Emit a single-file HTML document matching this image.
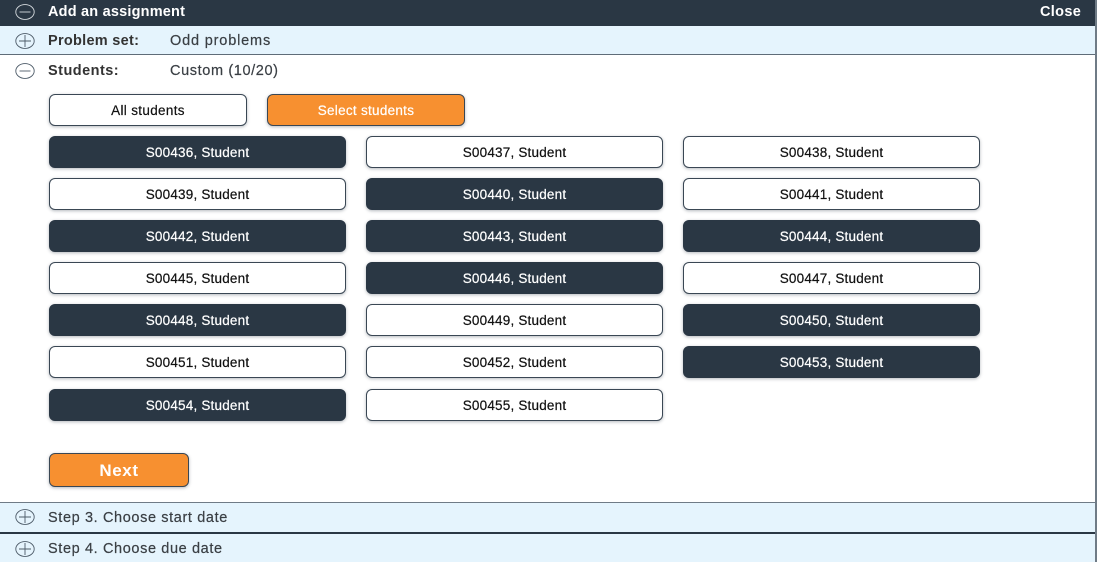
<!DOCTYPE html>
<html><head><meta charset="utf-8">
<style>
html,body{margin:0;padding:0;background:#fff}
body{width:1097px;height:562px;position:relative;overflow:hidden;font-family:"Liberation Sans",sans-serif;color:#2a3744}
.bar{position:absolute;left:0;width:1095px}
.t{position:absolute;white-space:nowrap;font-size:14.5px;letter-spacing:.62px;line-height:16px;-webkit-text-stroke:.2px currentColor}
.b{font-weight:bold;letter-spacing:.28px;-webkit-text-stroke:0}
.btn{position:absolute;box-sizing:border-box;border-radius:6px;border:1.5px solid #3a4754;text-align:center;background:#fff;color:#111;font-size:13.5px;letter-spacing:.2px;box-shadow:0 1px 3px rgba(42,55,68,.35);-webkit-text-stroke:.2px currentColor}
.s{width:297px;height:32px;line-height:32px}
.d{background:#2a3744;color:#fff;border-color:#2a3744}
.o{background:#f79030;color:#fff;border-color:#3a4754}
svg{position:absolute;left:15px}
</style></head><body>
<div style="position:absolute;left:1095px;top:0;width:2px;height:562px;background:#6f7b86"></div>

<div class="bar" style="top:0;height:26px;background:#2a3744"></div>
<svg style="top:2.5px" width="20" height="18" viewBox="0 0 20 18" fill="none" stroke="#d5dade" stroke-width=".9"><ellipse cx="10" cy="9" rx="9.2" ry="7.4"/><path d="M4.5 9h11"/></svg>
<div class="t b" style="left:48px;top:4px;color:#fff;letter-spacing:.2px">Add an assignment</div>
<div class="t b" style="left:1040px;top:4px;color:#fff;letter-spacing:.33px">Close</div>

<div class="bar" style="top:26px;height:29px;background:#e5f4fd;border-bottom:1.5px solid #5f6c78;box-sizing:border-box"></div>
<svg style="top:31.5px" width="20" height="18" viewBox="0 0 20 18" fill="none" stroke="#4d5b68" stroke-width=".9"><ellipse cx="10" cy="9" rx="9.2" ry="7.4"/><path d="M4 9h12M10 3v12"/></svg>
<div class="t b" style="left:48px;top:33px;color:#333">Problem set:</div>
<div class="t" style="left:170px;top:33px;color:#3a3f44;letter-spacing:.83px">Odd problems</div>

<svg style="top:61.5px" width="20" height="18" viewBox="0 0 20 18" fill="none" stroke="#4d5b68" stroke-width=".9"><ellipse cx="10" cy="9" rx="9.2" ry="7.4"/><path d="M4.5 9h11"/></svg>
<div class="t b" style="left:48px;top:63px;color:#333;letter-spacing:.47px">Students:</div>
<div class="t" style="left:170px;top:63px;color:#3a3f44">Custom (10/20)</div>

<div class="btn" style="left:49px;top:94px;width:198px;height:32px;line-height:31px;letter-spacing:.33px">All students</div>
<div class="btn o" style="left:267px;top:94px;width:198px;height:32px;line-height:31px;letter-spacing:.28px">Select students</div>

<div class="btn s d" style="left:49px;top:136px">S00436, Student</div>
<div class="btn s" style="left:366px;top:136px">S00437, Student</div>
<div class="btn s" style="left:683px;top:136px">S00438, Student</div>

<div class="btn s" style="left:49px;top:178px">S00439, Student</div>
<div class="btn s d" style="left:366px;top:178px">S00440, Student</div>
<div class="btn s" style="left:683px;top:178px">S00441, Student</div>

<div class="btn s d" style="left:49px;top:220px">S00442, Student</div>
<div class="btn s d" style="left:366px;top:220px">S00443, Student</div>
<div class="btn s d" style="left:683px;top:220px">S00444, Student</div>

<div class="btn s" style="left:49px;top:262px">S00445, Student</div>
<div class="btn s d" style="left:366px;top:262px">S00446, Student</div>
<div class="btn s" style="left:683px;top:262px">S00447, Student</div>

<div class="btn s d" style="left:49px;top:304px">S00448, Student</div>
<div class="btn s" style="left:366px;top:304px">S00449, Student</div>
<div class="btn s d" style="left:683px;top:304px">S00450, Student</div>

<div class="btn s" style="left:49px;top:346px">S00451, Student</div>
<div class="btn s" style="left:366px;top:346px">S00452, Student</div>
<div class="btn s d" style="left:683px;top:346px">S00453, Student</div>

<div class="btn s d" style="left:49px;top:388.5px">S00454, Student</div>
<div class="btn s" style="left:366px;top:388.5px">S00455, Student</div>

<div class="btn o" style="left:49px;top:453px;width:140px;height:34px;line-height:34px;font-size:17px;font-weight:bold;letter-spacing:.6px;-webkit-text-stroke:0">Next</div>

<div class="bar" style="top:502px;height:30px;background:#e5f4fd;border-top:1.5px solid #6f7b86;box-sizing:border-box"></div>
<svg style="top:508px" width="20" height="18" viewBox="0 0 20 18" fill="none" stroke="#4d5b68" stroke-width=".9"><ellipse cx="10" cy="9" rx="9.2" ry="7.4"/><path d="M4 9h12M10 3v12"/></svg>
<div class="t" style="left:48px;top:510px;color:#3a3f44">Step 3. Choose start date</div>

<div class="bar" style="top:532px;height:2px;background:#2a3744"></div>
<div class="bar" style="top:534px;height:28px;background:#e5f4fd"></div>
<svg style="top:539.5px" width="20" height="18" viewBox="0 0 20 18" fill="none" stroke="#4d5b68" stroke-width=".9"><ellipse cx="10" cy="9" rx="9.2" ry="7.4"/><path d="M4 9h12M10 3v12"/></svg>
<div class="t" style="left:48px;top:541px;color:#3a3f44">Step 4. Choose due date</div>
</body></html>
